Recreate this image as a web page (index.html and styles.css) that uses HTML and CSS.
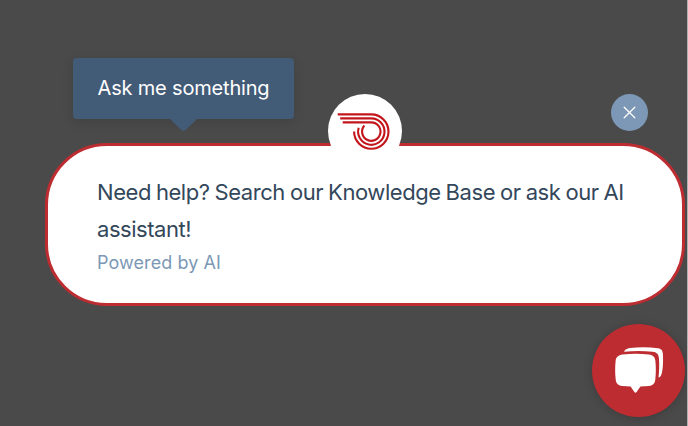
FILE: index.html
```html
<!DOCTYPE html>
<html lang="en">
<head>
<meta charset="utf-8">
<title>Assistant</title>
<link rel="stylesheet" href="styles.css">
</head>
<body>
<main class="page">
  <div class="tooltip">Ask me something</div>
  <button class="close" aria-label="Close">
    <svg width="37" height="37" viewBox="0 0 37 37"><path d="M13.2 13.2l10.6 10.6M23.8 13.2l-10.6 10.6" fill="none" stroke="#fff" stroke-width="1.3" stroke-linecap="round"/></svg>
  </button>
  <section class="bubble">
    <div class="avatar">
      <svg width="74" height="74" viewBox="328 94 74 74" fill="none" stroke="#c3161c" stroke-width="2.1">
        <path d="M337.7 114.4H371.3A17.2 17.2 0 1 1 354.1 131.6"/>
        <path d="M340.2 118.4H371.3A13.2 13.2 0 1 1 358.7 127.7"/>
        <path d="M342.7 122.4H371.3A9.2 9.2 0 1 1 364.4 125.5"/>
      </svg>
    </div>
    <p class="message">Need help? Search our Knowledge Base or ask our AI assistant!</p>
    <p class="credit">Powered by AI</p>
  </section>
  <button class="launcher" aria-label="Open chat">
    <svg width="93" height="93" viewBox="592 324 93 93" fill="#fff">
      <path d="M624 351.7C624.8 349.5 627 348.4 630 348C639 347 649 347 658 348.2C661.5 348.8 662.7 350.5 662.9 354C663.3 361 663 369 661.7 373.5C661.1 376 659.8 377.4 658.5 377.5C659.2 372 659.5 364 658.9 358C658.5 354 656.5 352.3 652.8 351.8C643 350.8 634 350.9 624 351.7Z"/>
      <path d="M622.5 354.6C631 353.6 640 353.6 649 354.6C653 355.1 655 357 655.4 361C656 367.5 656 373.5 655.3 379.5C654.8 383.5 653 385.5 649 385.9L640.4 386.5L636.8 391.8Q635.5 393.6 634.2 391.8L630.6 386.5L622 385.9C618 385.5 616.2 383.5 615.7 379.5C615 373.5 615 367.5 615.6 361C616 357 618.5 355.1 622.5 354.6Z"/>
    </svg>
  </button>
</main>
</body>
</html>
```
FILE: styles.css
```css
* { box-sizing: border-box; }
body { margin: 0; background: #4a4a4a; font-family: Inter, "Liberation Sans", sans-serif; }
button { border: 0; padding: 0; border-radius: 50%; display: block; }
svg { display: block; }
p { margin: 0; }
.page {
  width: 688px;
  height: 426px;
  overflow: hidden;
  display: grid;
  grid-template-columns: 1fr auto;
  grid-template-rows: 143px 163px 1fr;
  padding: 0 1px 0 45px;
  border-right: 1px solid #b0b0b0;
}
.tooltip {
  position: relative;
  width: 221px;
  height: 61px;
  margin: 58px 0 0 28px;
  border-radius: 4px;
  background: #425b76;
  color: #fff;
  font-size: 20px;
  letter-spacing: -.18px;
  line-height: 61px;
  text-align: center;
  box-shadow: 0 3px 12px rgba(0, 0, 0, .13);
}
.tooltip::after {
  content: "";
  position: absolute;
  left: 96px;
  top: 60px;
  width: 29px;
  height: 13px;
  background: #425b76;
  clip-path: polygon(0 0, 100% 0, 58% 92%, 50% 100%, 42% 92%);
}
.close { width: 37px; height: 37px; margin: 94px 38px 0 0; background: #7c98b6; }
.bubble {
  position: relative;
  grid-column: 1 / -1;
  width: 640px;
  height: 163px;
  padding: 28px 45px 0 49px;
  border: 3px solid #bd2c31;
  border-radius: 62px;
  background: #fff;
}
.avatar {
  position: absolute;
  left: 280px;
  top: -52px;
  width: 74px;
  height: 74px;
  border-radius: 50%;
  background: #fff;
}
.message { color: #33475b; font-size: 22px; letter-spacing: -.45px; word-spacing: -.7px; line-height: 37px; }
.credit { color: #7c98b6; font-size: 18px; letter-spacing: .08px; line-height: 29px; }
.launcher {
  grid-column: 1 / -1;
  justify-self: end;
  width: 93px;
  height: 93px;
  margin: 18px 1px 0 0;
  background: #bd2c31;
  box-shadow: 0 1px 10px rgba(0, 0, 0, .2);
}
```
